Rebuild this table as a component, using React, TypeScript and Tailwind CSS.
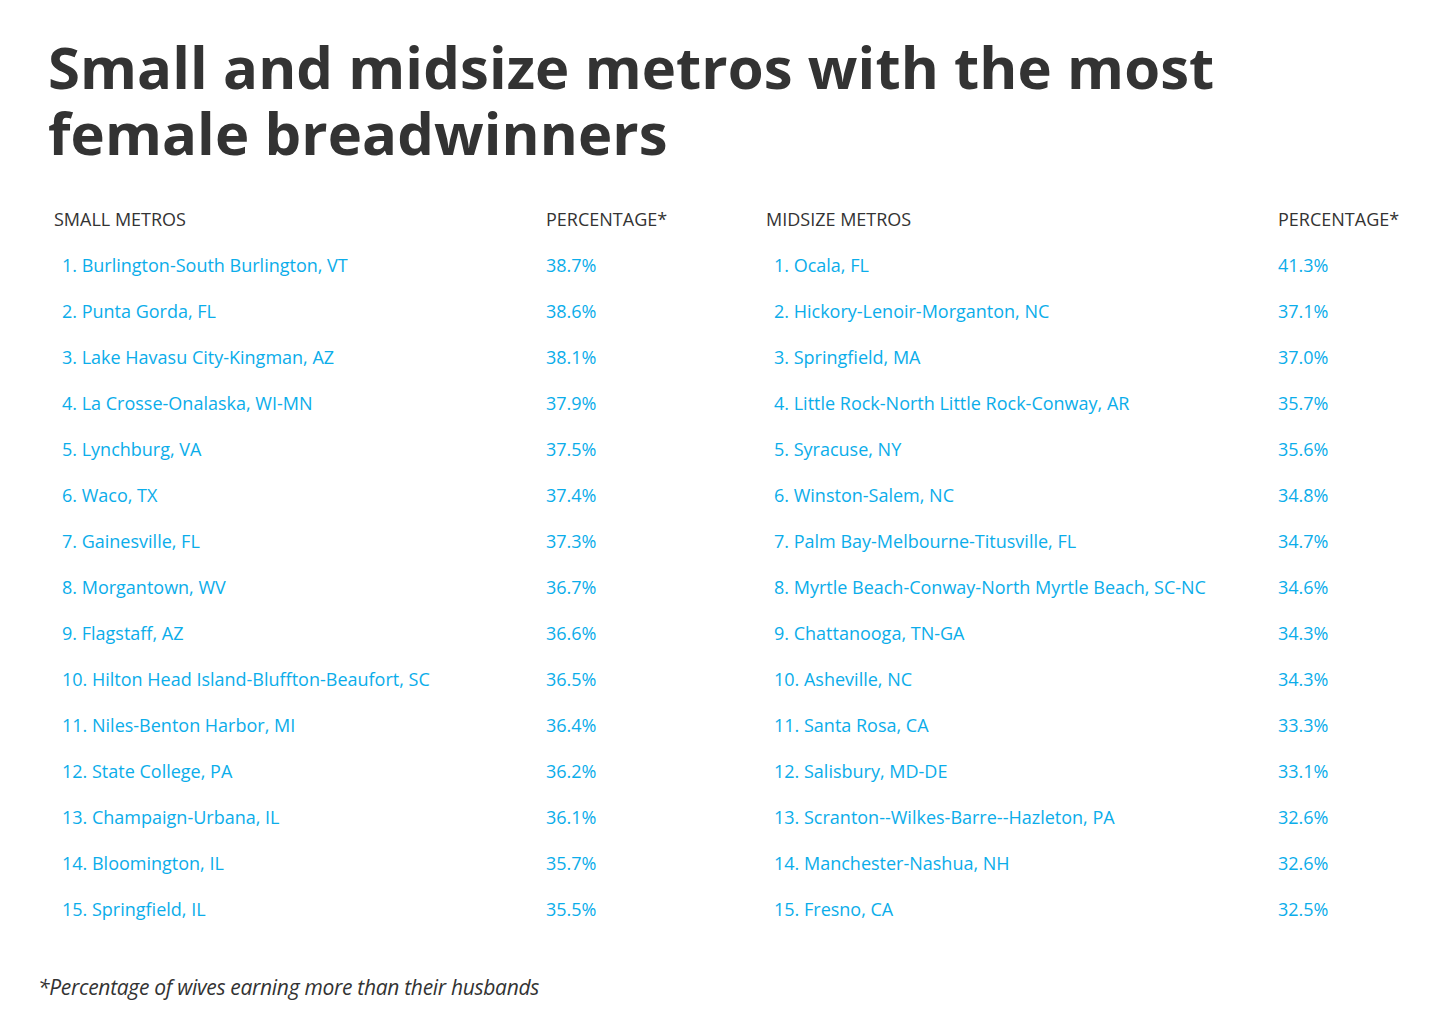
const small = [
  ["1. Burlington-South Burlington, VT", "38.7%"],
  ["2. Punta Gorda, FL", "38.6%"],
  ["3. Lake Havasu City-Kingman, AZ", "38.1%"],
  ["4. La Crosse-Onalaska, WI-MN", "37.9%"],
  ["5. Lynchburg, VA", "37.5%"],
  ["6. Waco, TX", "37.4%"],
  ["7. Gainesville, FL", "37.3%"],
  ["8. Morgantown, WV", "36.7%"],
  ["9. Flagstaff, AZ", "36.6%"],
  ["10. Hilton Head Island-Bluffton-Beaufort, SC", "36.5%"],
  ["11. Niles-Benton Harbor, MI", "36.4%"],
  ["12. State College, PA", "36.2%"],
  ["13. Champaign-Urbana, IL", "36.1%"],
  ["14. Bloomington, IL", "35.7%"],
  ["15. Springfield, IL", "35.5%"],
];

const midsize = [
  ["1. Ocala, FL", "41.3%"],
  ["2. Hickory-Lenoir-Morganton, NC", "37.1%"],
  ["3. Springfield, MA", "37.0%"],
  ["4. Little Rock-North Little Rock-Conway, AR", "35.7%"],
  ["5. Syracuse, NY", "35.6%"],
  ["6. Winston-Salem, NC", "34.8%"],
  ["7. Palm Bay-Melbourne-Titusville, FL", "34.7%"],
  ["8. Myrtle Beach-Conway-North Myrtle Beach, SC-NC", "34.6%"],
  ["9. Chattanooga, TN-GA", "34.3%"],
  ["10. Asheville, NC", "34.3%"],
  ["11. Santa Rosa, CA", "33.3%"],
  ["12. Salisbury, MD-DE", "33.1%"],
  ["13. Scranton--Wilkes-Barre--Hazleton, PA", "32.6%"],
  ["14. Manchester-Nashua, NH", "32.6%"],
  ["15. Fresno, CA", "32.5%"],
];

const MetroTable = ({ title, rows, nameWidth }: { title: string; rows: string[][]; nameWidth: string }) => (
  <div className="flex flex-col">
    <div className="flex h-[46px] items-center text-[18px] text-[#333] uppercase">
      <div className={`${nameWidth} pl-2`}>{title}</div>
      <div>Percentage*</div>
    </div>
    {rows.map(([name, pct]) => (
      <div key={name} className="flex h-[46px] items-center text-[18px] text-[#0badea]">
        <div className={`${nameWidth} pl-4`}>{name}</div>
        <div>{pct}</div>
      </div>
    ))}
  </div>
);

export default function App() {
  return (
    <div className="w-[1450px] h-[1012px] bg-white" style={{ fontFamily: "'Open Sans', sans-serif" }}>
      <h1 className="pl-12 pt-[34px] text-[58px] leading-[66px] font-bold text-[#333] tracking-[0.1px]">
        Small and midsize metros with the most
        <br />
        female breadwinners
      </h1>
      <div className="flex pl-[46px] pt-[30px]">
        <div className="w-[712px]">
          <MetroTable title="Small metros" rows={small} nameWidth="w-[500px]" />
        </div>
        <MetroTable title="Midsize metros" rows={midsize} nameWidth="w-[520px]" />
      </div>
      <p className="pl-[38px] pt-[40px] text-[21px] italic text-[#333] tracking-[-0.3px]">
        *Percentage of wives earning more than their husbands
      </p>
    </div>
  );
}
